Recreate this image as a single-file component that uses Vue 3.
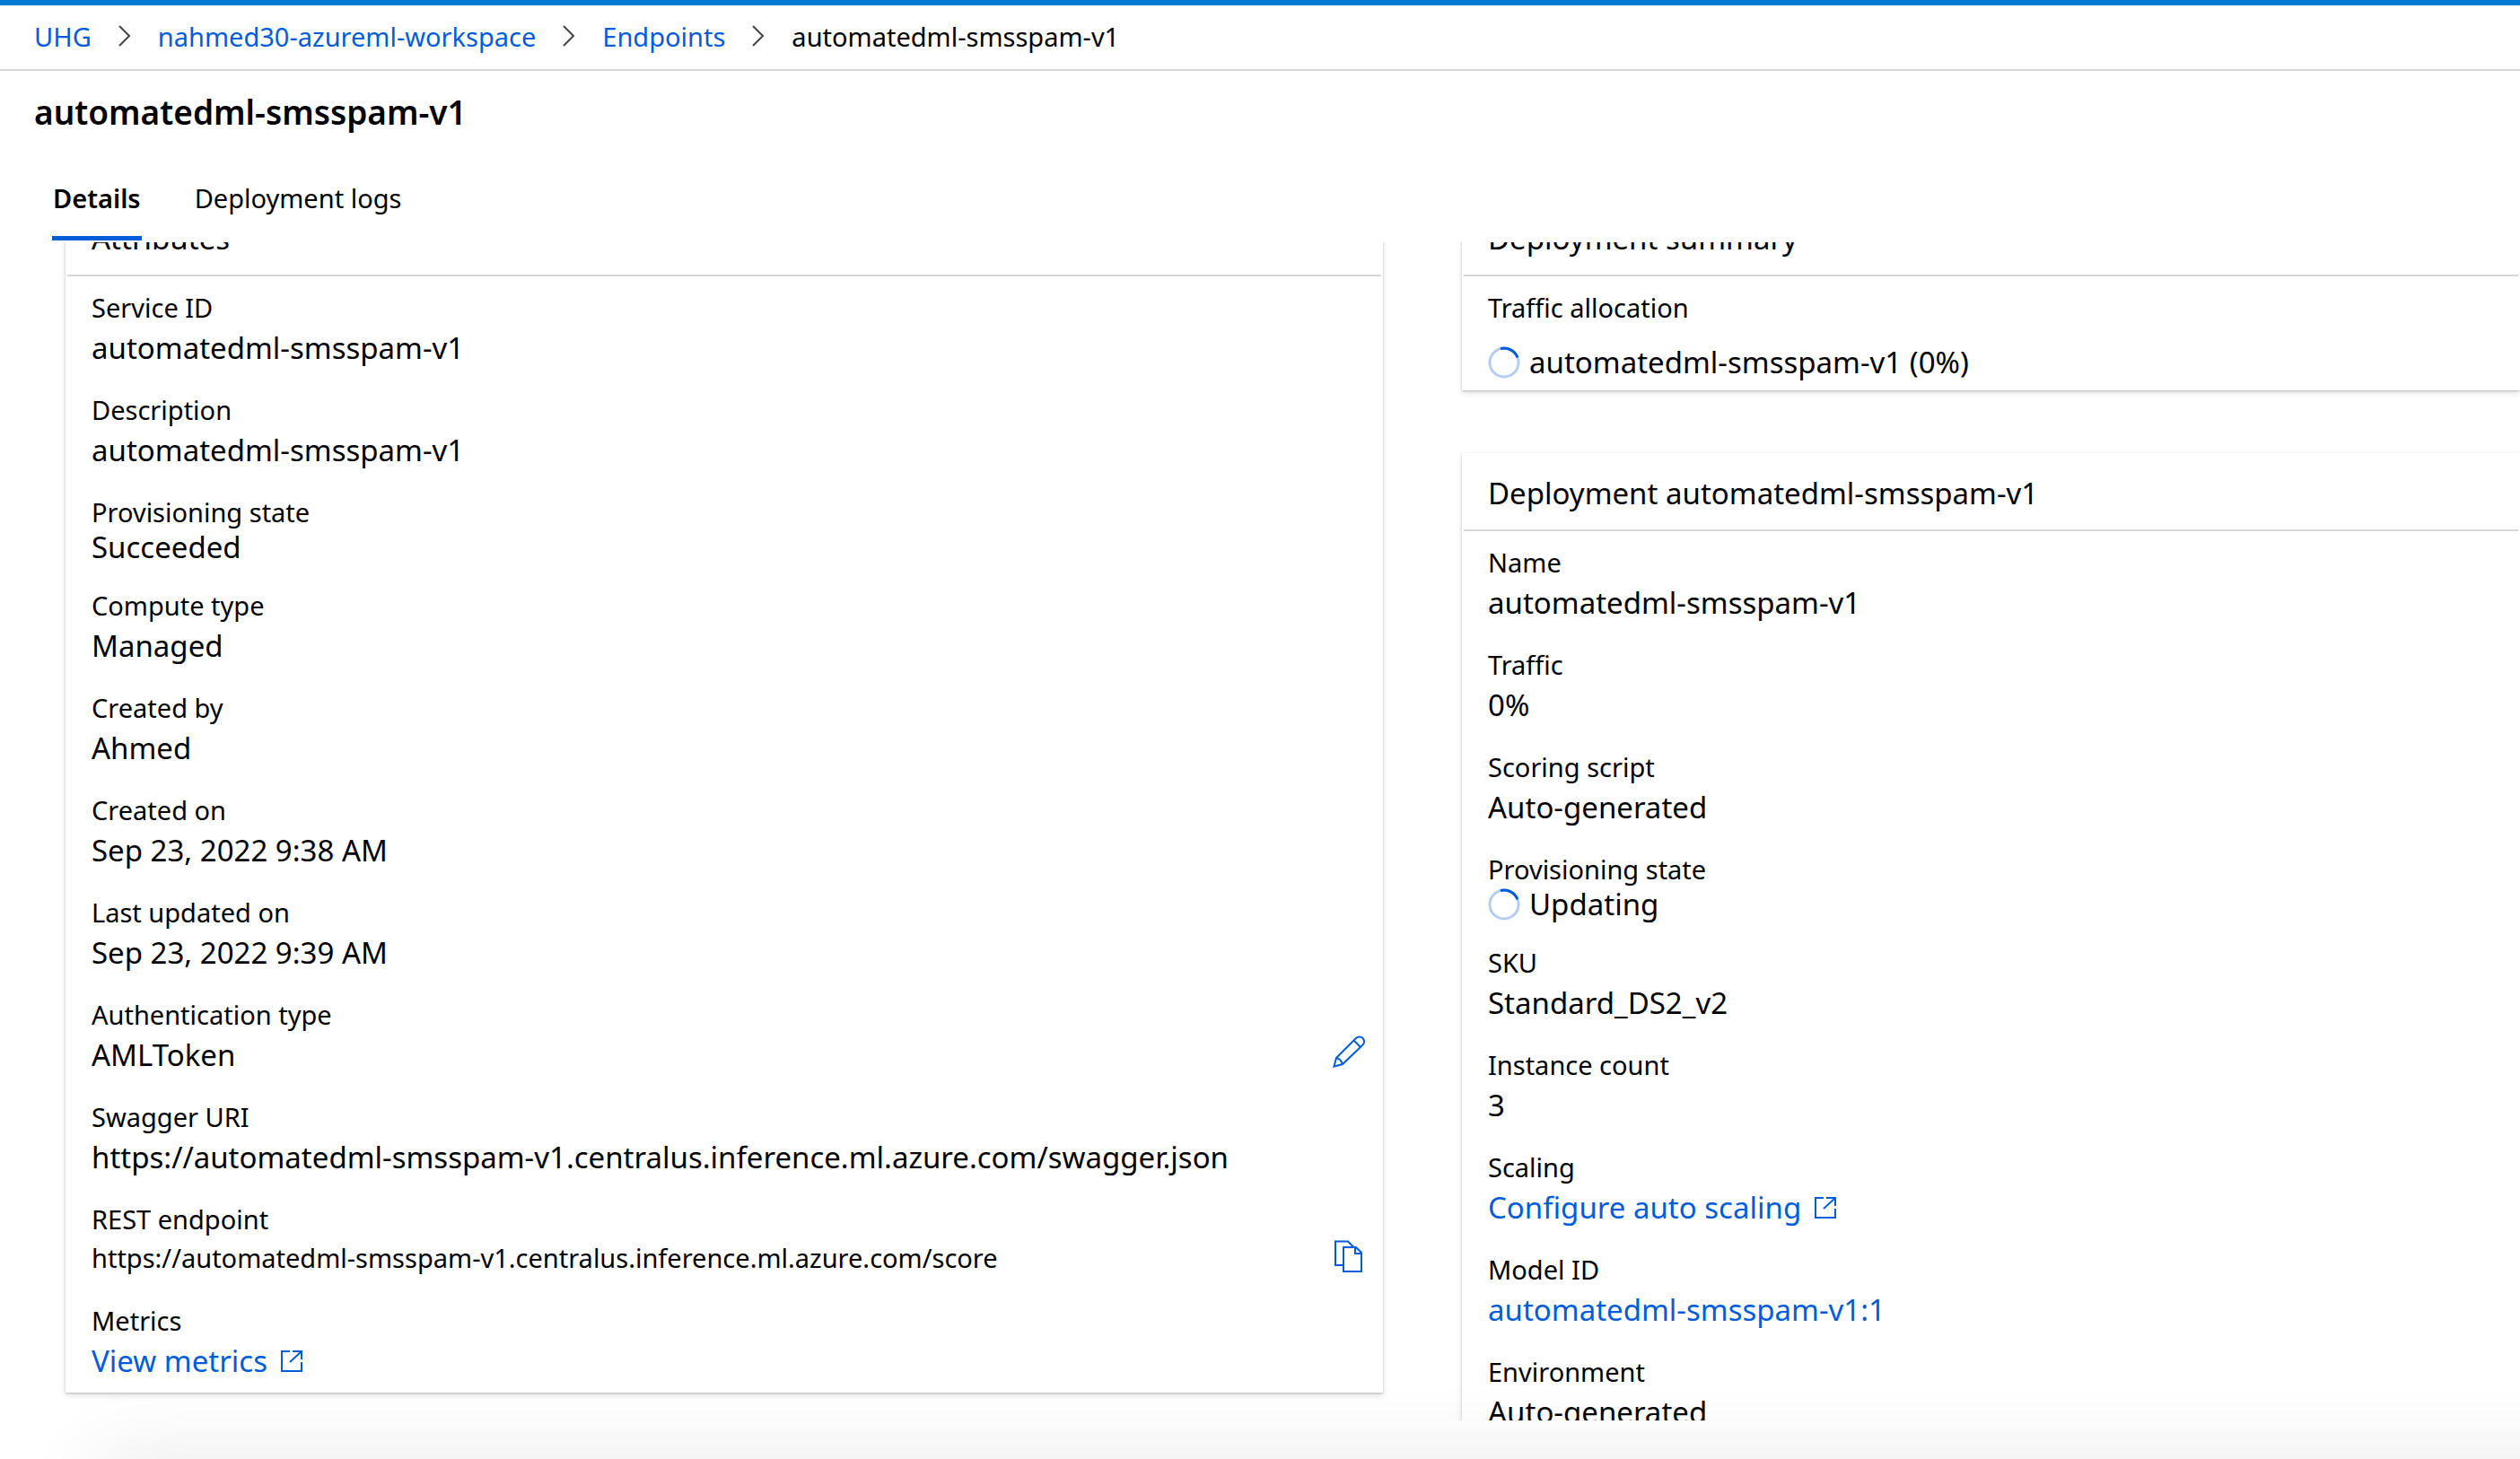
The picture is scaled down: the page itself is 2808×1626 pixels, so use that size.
<script setup>
const crumbs = ['UHG', 'nahmed30-azureml-workspace', 'Endpoints']

const attributes = [
  { label: 'Service ID', value: 'automatedml-smsspam-v1' },
  { label: 'Description', value: 'automatedml-smsspam-v1' },
  { label: 'Provisioning state', value: 'Succeeded', kind: 'state' },
  { label: 'Compute type', value: 'Managed' },
  { label: 'Created by', value: 'Ahmed' },
  { label: 'Created on', value: 'Sep 23, 2022 9:38 AM' },
  { label: 'Last updated on', value: 'Sep 23, 2022 9:39 AM' },
  { label: 'Authentication type', value: 'AMLToken', action: 'edit' },
  { label: 'Swagger URI', value: 'https://automatedml-smsspam-v1.centralus.inference.ml.azure.com/swagger.json' },
  { label: 'REST endpoint', value: 'https://automatedml-smsspam-v1.centralus.inference.ml.azure.com/score', kind: 'compact', action: 'copy' },
  { label: 'Metrics', value: 'View metrics', link: true, external: true },
]

const deployment = [
  { label: 'Name', value: 'automatedml-smsspam-v1' },
  { label: 'Traffic', value: '0%' },
  { label: 'Scoring script', value: 'Auto-generated' },
  { label: 'Provisioning state', value: 'Updating', kind: 'state', busy: true },
  { label: 'SKU', value: 'Standard_DS2_v2' },
  { label: 'Instance count', value: '3' },
  { label: 'Scaling', value: 'Configure auto scaling', link: true, external: true },
  { label: 'Model ID', value: 'automatedml-smsspam-v1:1', link: true },
  { label: 'Environment', value: 'Auto-generated' },
]

const summary = [
  { label: 'Traffic allocation', value: 'automatedml-smsspam-v1 (0%)', kind: 'spaced', busy: true },
]

const deploymentCards = [
  { title: 'Deployment summary', fields: summary },
  { title: 'Deployment automatedml-smsspam-v1', fields: deployment },
]

const columns = [[{ title: 'Attributes', fields: attributes }], deploymentCards]
</script>

<template>
  <div class="page">
    <nav class="breadcrumb" aria-label="Breadcrumb">
      <template v-for="crumb in crumbs" :key="crumb">
        <a href="#">{{ crumb }}</a>
        <svg class="chevron" viewBox="0 0 14 24" aria-hidden="true">
          <path d="M1 1 L12 12 L1 23" />
        </svg>
      </template>
      <span>automatedml-smsspam-v1</span>
    </nav>

    <h1 class="title">automatedml-smsspam-v1</h1>

    <div class="tabs" role="tablist">
      <button class="tab active" role="tab" aria-selected="true">Details</button>
      <button class="tab" role="tab" aria-selected="false">Deployment logs</button>
    </div>

    <main class="viewport">
      <div class="columns">
        <div v-for="(cards, i) in columns" :key="i" class="column">
          <section v-for="card in cards" :key="card.title" class="card">
            <h2 class="card-title">{{ card.title }}</h2>
            <dl class="fields">
              <div v-for="field in card.fields" :key="field.label" class="field" :class="field.kind">
                <dt>{{ field.label }}</dt>
                <dd>
                  <svg v-if="field.busy" class="spinner" viewBox="0 0 36 36" aria-hidden="true">
                    <circle cx="18" cy="18" r="16" />
                    <path d="M14 2.500 A16 16 0 0 1 33 12.500" />
                  </svg>
                  <a v-if="field.link" href="#">{{ field.value }}</a>
                  <span v-else>{{ field.value }}</span>
                  <svg v-if="field.external" class="external" viewBox="0 0 26 26" aria-hidden="true">
                    <path d="M11 2 H2 V24 H24 V14 M14 2 H24 V11 M24 2 L11 14" />
                  </svg>
                  <button v-if="field.action === 'edit'" class="icon-button" aria-label="Edit authentication type">
                    <svg viewBox="0 0 36 36">
                      <path d="M1.500 34.500 L4 25 L26 3 A5.200 5.200 0 0 1 33.500 10.500 L11 32 Z M23.500 5.500 L31 13 M4 25 Q9 26 11 32" />
                    </svg>
                  </button>
                  <button v-if="field.action === 'copy'" class="icon-button" aria-label="Copy REST endpoint">
                    <svg viewBox="0 0 36 36">
                      <path d="M12 28 H3 V1.500 H17 L23 7.500 M12 8 H26 L32 14 V35 H12 Z M25 8 V15 H32" />
                    </svg>
                  </button>
                </dd>
              </div>
            </dl>
          </section>
        </div>
      </div>
    </main>
  </div>
</template>

<style>
body {
  margin: 0;
  background: #fff;
}
</style>

<style scoped>
.page {
  position: relative;
  display: flex;
  flex-direction: column;
  height: 100vh;
  box-sizing: border-box;
  padding-bottom: 43px;
  overflow: hidden;
  border-top: 6px solid #0078d4;
  background: #fff;
  color: #000;
  font-family: "Noto Sans", "Open Sans", sans-serif;
  font-size: 29px;
}

/* soft shade rising from the bottom edge */
.page::after {
  content: "";
  position: absolute;
  top: 100%;
  left: 110px;
  right: -110px;
  height: 60px;
  box-shadow: 0 0 90px rgba(0, 0, 0, 0.1);
  pointer-events: none;
}

a {
  color: #015cda;
  text-decoration: none;
}

.breadcrumb {
  display: flex;
  align-items: center;
  flex: none;
  height: 68px;
  padding: 0 0 3px 38px;
  border-bottom: 2px solid #d6d6d6;
}

.chevron {
  width: 14px;
  height: 24px;
  margin: 0 30px;
  fill: none;
  stroke: #444;
  stroke-width: 2;
}

.title {
  flex: none;
  margin: 18px 0 0 38px;
  font-size: 37px;
  line-height: 56px;
  font-weight: 600;
}

.tabs {
  display: flex;
  flex: none;
  gap: 58px;
  margin: 37px 0 2px 58px;
}

.tab {
  height: 78px;
  padding: 0 1px 13px;
  border: 0;
  border-bottom: 5px solid transparent;
  background: none;
  color: #000;
  font: inherit;
}

.tab.active {
  border-bottom-color: #015cda;
  font-weight: 600;
}

.viewport {
  flex: 1;
  min-height: 0;
  overflow: hidden;
}

/* the panel is scrolled a little way down */
.columns {
  display: grid;
  grid-template-columns: 1468fr 1179fr;
  align-items: start;
  gap: 88px;
  margin-top: -49px;
  padding-left: 73px;
}

.column {
  display: flex;
  flex-direction: column;
  gap: 70px;
  min-width: 0;
}

.card {
  padding: 0 2px 10px;
  background: #fff;
  box-shadow: 0 3px 7px rgba(0, 0, 0, 0.13), 0 1px 2px rgba(0, 0, 0, 0.2);
}

.card-title {
  margin: 0;
  padding: 5px 0 0 27px;
  border-bottom: 2px solid #d6d6d6;
  font-size: 33px;
  line-height: 80px;
  font-weight: 400;
}

.fields {
  display: flex;
  flex-direction: column;
  gap: 24px;
  margin: 0;
  padding: 15px 18px 0 27px;
}

dt {
  line-height: 40px;
}

dd {
  display: flex;
  align-items: center;
  height: 50px;
  margin: 0;
  font-size: 33px;
  line-height: 50px;
  white-space: nowrap;
}

.state {
  padding-bottom: 2px;
}

.state dd {
  height: 38px;
  line-height: 38px;
}

.compact {
  padding-bottom: 3px;
}

.compact dd {
  height: 46px;
  font-size: 29px;
  line-height: 46px;
}

.spaced dd {
  height: 42px;
  margin-top: 20px;
}

.spinner {
  width: 36px;
  height: 36px;
  margin-right: 10px;
  fill: none;
  stroke: #b3cef4;
  stroke-width: 3;
}

.spinner path {
  stroke: #015cda;
}

.external {
  width: 26px;
  height: 26px;
  margin-left: 14px;
  fill: none;
  stroke: #015cda;
  stroke-width: 2;
}

.icon-button {
  display: flex;
  margin-left: auto;
  padding: 0 0 8px;
  border: 0;
  background: none;
}

.compact .icon-button {
  padding-bottom: 4px;
}

.icon-button svg {
  width: 36px;
  height: 36px;
  fill: none;
  stroke: #015cda;
  stroke-width: 2;
}
</style>
